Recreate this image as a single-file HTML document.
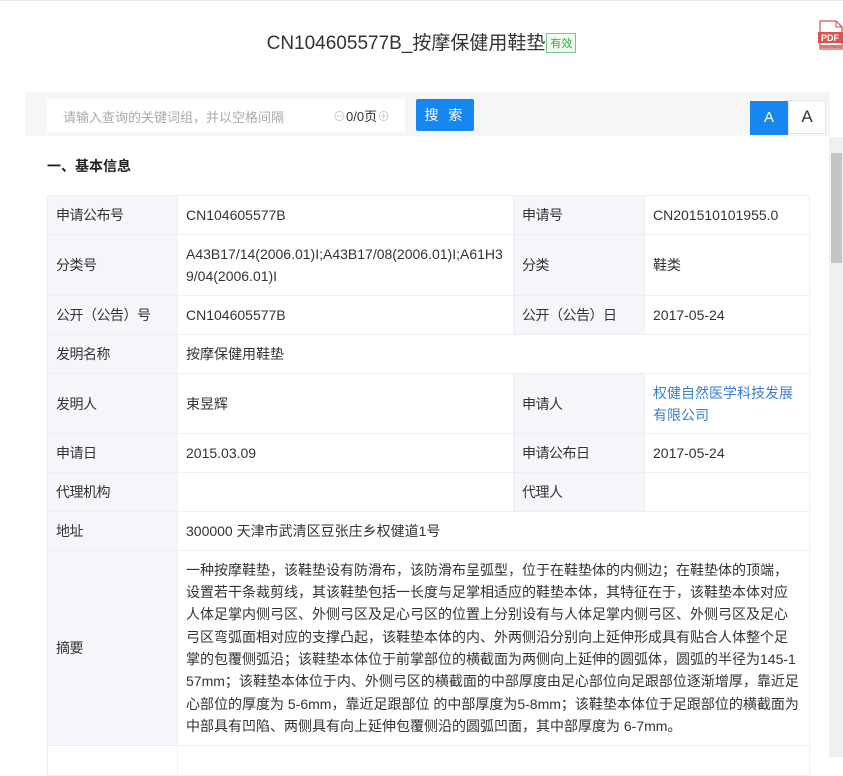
<!DOCTYPE html>
<html><head><meta charset="utf-8"><style>
*{margin:0;padding:0;box-sizing:border-box}
body{width:843px;height:757px;overflow:hidden;background:#fff;font-family:"Liberation Sans","Noto Sans CJK SC",sans-serif;color:#333;position:relative}
.topline{position:absolute;left:0;top:0;width:843px;height:1px;background:#e8e8e8}
.title{position:absolute;left:0;width:843px;top:28px;text-align:center;font-size:19px;color:#333}
.tag{display:inline-block;font-size:11px;color:#3aa64a;border:1px solid #7cc68a;background:#f0faf0;padding:1px 3px;vertical-align:2px;margin-left:1px}
.pdf{position:absolute;left:817px;top:20px;width:26px;height:30px}
.bar{position:absolute;left:25px;top:92px;width:805px;height:44px;background:#f6f6f6}
.inp{position:absolute;left:47px;top:99px;width:358px;height:33px;background:#fff;font-size:13px;color:#aaa;padding:8px 16px}
.cnt{position:absolute;left:333px;top:106px;font-size:13px;color:#333}
.btn{position:absolute;left:416px;top:99px;width:58px;height:32px;background:#1687ee;color:#fff;font-size:14px;text-align:center;line-height:32px;letter-spacing:3px;border-radius:2px}
.a1{position:absolute;left:750px;top:101px;width:38px;height:34px;background:#1687ee;color:#fff;font-size:15px;text-align:center;line-height:34px}
.a2{position:absolute;left:788px;top:100px;width:38px;height:34px;background:#fff;border:1px solid #e4e4e4;color:#333;font-size:17px;text-align:center;line-height:32px}
.sb{position:absolute;left:829px;top:137px;width:14px;height:620px;background:#f0f0f0}
.thumb{position:absolute;left:831px;top:153px;width:11px;height:110px;background:#c4c4c4}
.h{position:absolute;left:47px;top:156px;font-size:14px;font-weight:bold;color:#222}
table{position:absolute;left:47px;top:195px;width:762px;border-collapse:collapse;font-size:14px;table-layout:fixed}
td{border:1px solid #eef0f3;padding:0 8px;color:#333;vertical-align:middle;word-break:break-all;white-space:normal}
td.l,td.l2{background:#f4f6f9;white-space:nowrap;letter-spacing:-0.5px}
a{color:#3a7fd0;text-decoration:none}
.abs{line-height:22.3px;padding:6px 8px}
</style></head><body>
<div class="topline"></div>
<div class="title">CN104605577B_按摩保健用鞋垫<span class="tag">有效</span></div>
<svg class="pdf" viewBox="0 0 26 30"><path d="M3 1h16l6 6v22H3z" fill="#fff" stroke="#d9534f" stroke-width="1.2"/><path d="M19 1v6h6" fill="none" stroke="#d9534f"/><rect x="1" y="12" width="25" height="11" fill="#d9534f"/><text x="13" y="21" font-size="9" fill="#fff" text-anchor="middle" font-family="Liberation Sans" font-weight="bold">PDF</text><rect x="3" y="25" width="22" height="3" fill="#e57373"/></svg>
<div class="bar"></div>
<div class="inp">请输入查询的关键词组，并以空格间隔</div>
<div class="cnt"><span style="color:#ccc">⊖</span>0/0页<span style="color:#ccc">⊕</span></div>
<div class="btn">搜 索</div>
<div class="a1">A</div><div class="a2">A</div>
<div class="sb"></div><div class="thumb"></div>
<div class="h">一、基本信息</div>
<table>
<colgroup><col style="width:130px"><col style="width:336px"><col style="width:131px"><col style="width:165px"></colgroup>
<tr style="height:39px"><td class="l">申请公布号</td><td>CN104605577B</td><td class="l2">申请号</td><td>CN201510101955.0</td></tr>
<tr style="height:61px"><td class="l">分类号</td><td style="line-height:22px">A43B17/14(2006.01)I;A43B17/08(2006.01)I;A61H39/04(2006.01)I</td><td class="l2">分类</td><td>鞋类</td></tr>
<tr style="height:39px"><td class="l">公开（公告）号</td><td>CN104605577B</td><td class="l2">公开（公告）日</td><td>2017-05-24</td></tr>
<tr style="height:39px"><td class="l">发明名称</td><td colspan="3">按摩保健用鞋垫</td></tr>
<tr style="height:60px"><td class="l">发明人</td><td>束昱辉</td><td class="l2">申请人</td><td style="line-height:22px"><a>权健自然医学科技发展有限公司</a></td></tr>
<tr style="height:39px"><td class="l">申请日</td><td>2015.03.09</td><td class="l2">申请公布日</td><td>2017-05-24</td></tr>
<tr style="height:39px"><td class="l">代理机构</td><td></td><td class="l2">代理人</td><td></td></tr>
<tr style="height:39px"><td class="l">地址</td><td colspan="3">300000 天津市武清区豆张庄乡权健道1号</td></tr>
<tr style="height:195px"><td class="l">摘要</td><td colspan="3" class="abs">一种按摩鞋垫，该鞋垫设有防滑布，该防滑布呈弧型，位于在鞋垫体的内侧边；在鞋垫体的顶端，设置若干条裁剪线，其该鞋垫包括一长度与足掌相适应的鞋垫本体，其特征在于，该鞋垫本体对应人体足掌内侧弓区、外侧弓区及足心弓区的位置上分别设有与人体足掌内侧弓区、外侧弓区及足心弓区弯弧面相对应的支撑凸起，该鞋垫本体的内、外两侧沿分别向上延伸形成具有贴合人体整个足掌的包覆侧弧沿；该鞋垫本体位于前掌部位的横截面为两侧向上延伸的圆弧体，圆弧的半径为145-157mm；该鞋垫本体位于内、外侧弓区的横截面的中部厚度由足心部位向足跟部位逐渐增厚，靠近足心部位的厚度为 5-6mm，靠近足跟部位 的中部厚度为5-8mm；该鞋垫本体位于足跟部位的横截面为中部具有凹陷、两侧具有向上延伸包覆侧沿的圆弧凹面，其中部厚度为 6-7mm。</td></tr>
<tr style="height:30px"><td class="l" style="background:#fff"></td><td colspan="3"></td></tr>
</table>
</body></html>
